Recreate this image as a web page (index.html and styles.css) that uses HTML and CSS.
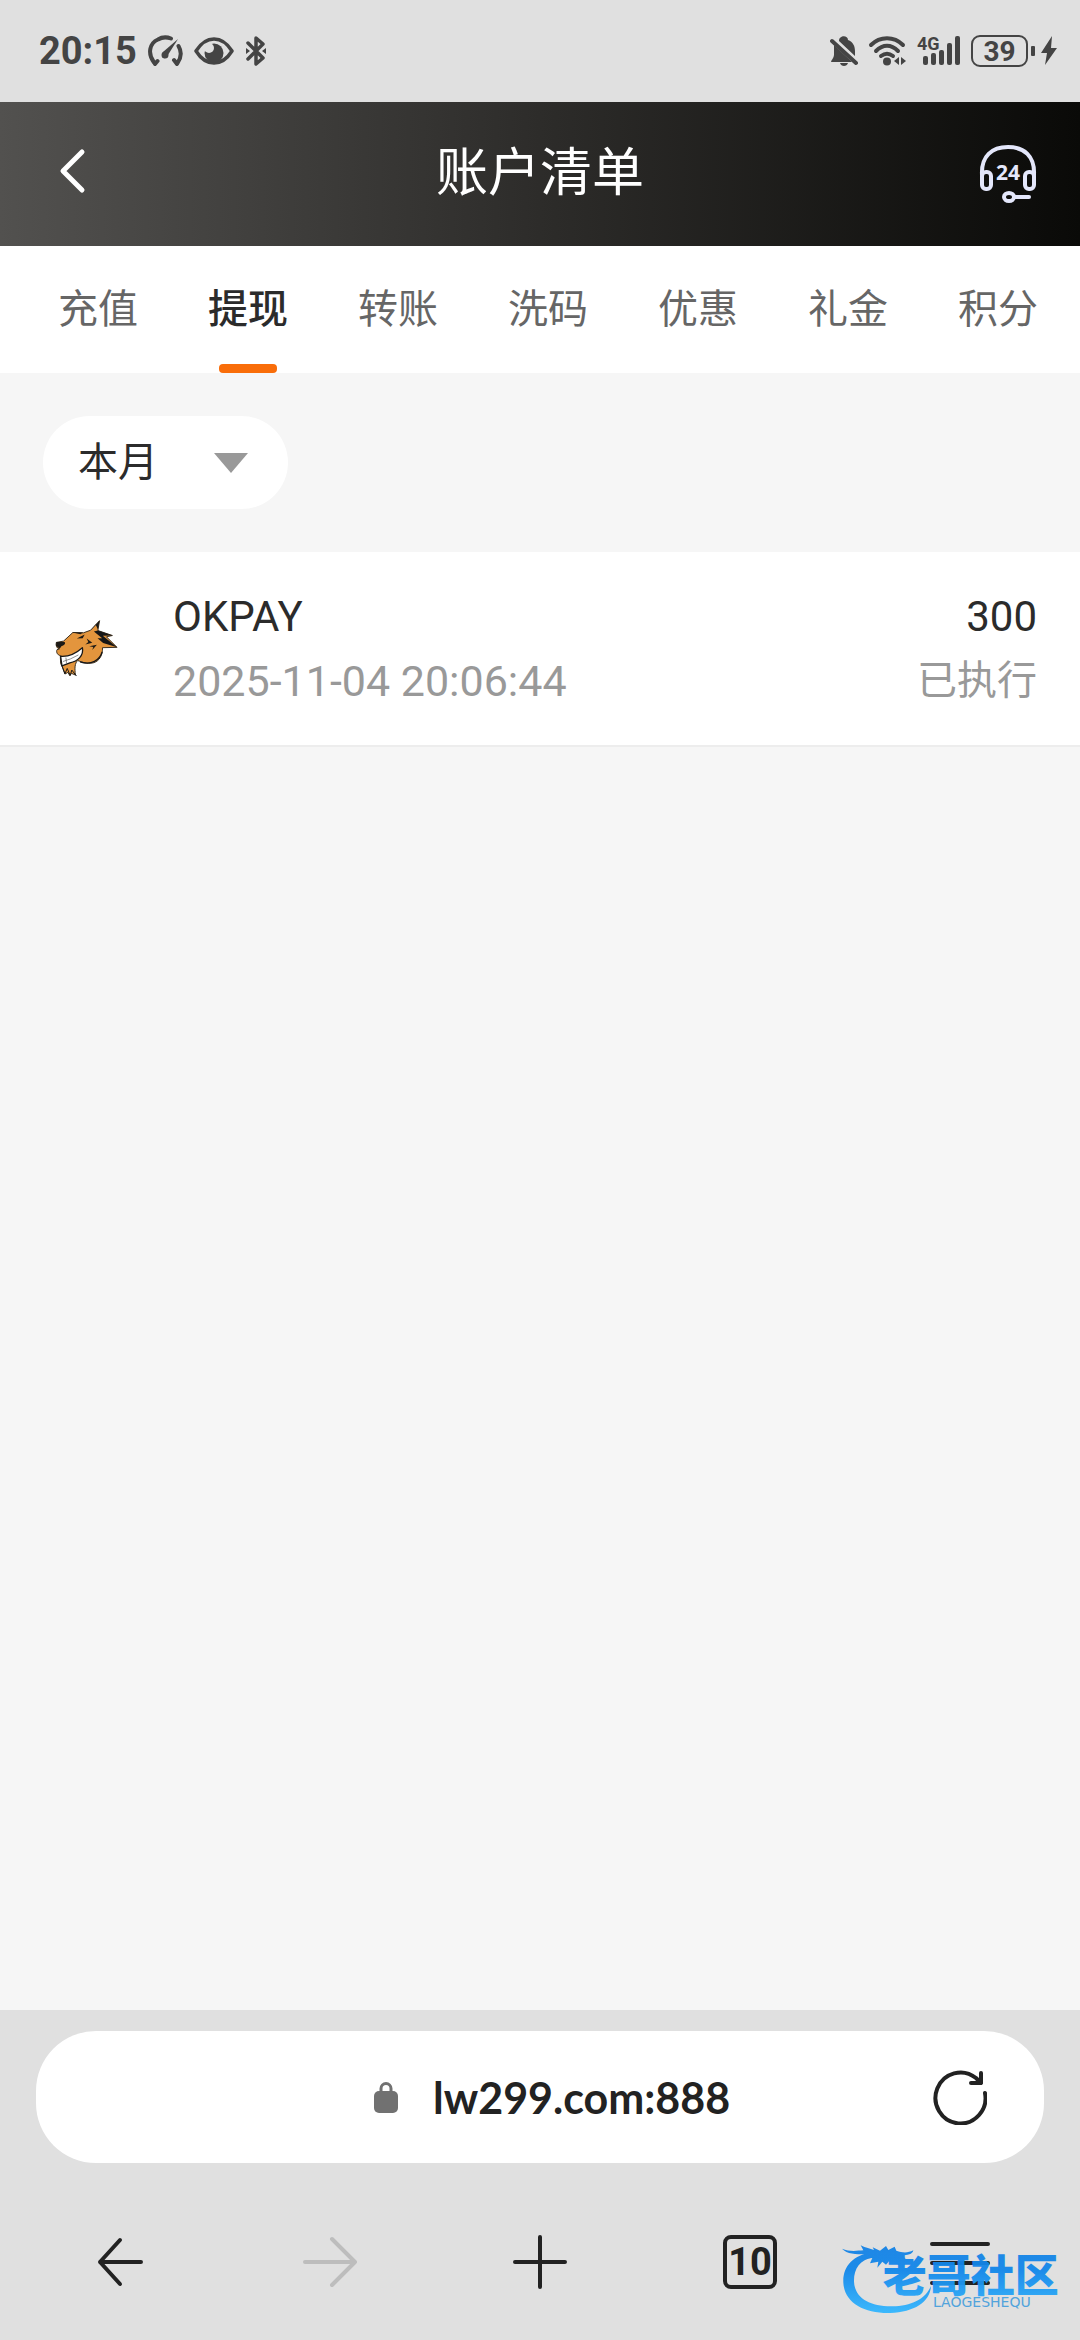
FILE: index.html
```
<!DOCTYPE html>
<html lang="zh-CN">
<head>
  <meta charset="UTF-8">
  <meta name="viewport" content="width=device-width, initial-scale=1.0">
  <title>账户清单</title>
  <link rel="stylesheet" href="styles.css">
</head>
<body>
  <div class="status-bar">
    <div class="status-left">
      <span class="time">20:15</span>
      <svg width="35" height="32" viewBox="0 0 35 32" fill="none" stroke="currentColor" stroke-width="4" stroke-linecap="round">
        <path d="M7 28.500l-1-1C-1 18 2 8 10 4.500C14 2 19 2 23 3.500M30.500 11C34 17 33 23 29.500 28l-.5.500M26 25l3 4M7 29l2.500-3"/>
        <path d="M30 4L18 23c-4 1-5-3-3-6z" fill="currentColor" stroke="none"/>
        <circle cx="17" cy="20" r="3.500" fill="currentColor" stroke="none"/>
      </svg>
      <svg width="40" height="28" viewBox="0 0 40 28">
        <path d="M2 14C12-2 28-2 38 14C28 30 12 30 2 14z" fill="none" stroke="currentColor" stroke-width="3.500" stroke-linejoin="round"/>
        <circle cx="20" cy="16" r="9.500" fill="currentColor"/>
        <circle cx="15" cy="11" r="5" fill="#e0e0e0"/>
      </svg>
      <svg width="22" height="32" viewBox="0 0 22 32" fill="none" stroke="currentColor" stroke-width="3.500" stroke-linejoin="round" stroke-linecap="round">
        <path d="M3 8l15 15l-7 6V3l7 6L3 24"/>
        <path d="M1 13l4 3l-4 3zM21 13l-4 3l4 3z" fill="currentColor" stroke="none"/>
      </svg>
    </div>
    <div class="status-right">
      <svg width="28" height="32" viewBox="0 0 28 32" fill="currentColor">
        <path d="M9 6c0-6 9-6 9-1c5 2 7 6 7 11v5zM4 10l18 17H1c0-2 3-4 3-7zM10 28h8c-1 4-7 4-8 0z"/>
        <path d="M2 6l24 22" stroke="currentColor" stroke-width="4" stroke-linecap="round"/>
      </svg>
      <svg width="39" height="32" viewBox="0 0 39 32" fill="none" stroke="currentColor" stroke-width="4" stroke-linecap="round">
        <path d="M3 10C12 1 26 1 35 10M8 16C15 9 23 9 30 16M13 21C17 18 21 18 25 21"/>
        <circle cx="19" cy="26.500" r="4" fill="currentColor" stroke="none"/>
        <path d="M31 22v8l-5-4zM33 22v8l5-4z" fill="currentColor" stroke="none"/>
      </svg>
      <svg class="signal" width="44" height="32" viewBox="0 0 44 32" fill="currentColor">
        <text x="0" y="15" class="network">4G</text>
        <rect x="6" y="21" width="5" height="9" rx="2"/>
        <rect x="14" y="18" width="5" height="12" rx="2"/>
        <rect x="22" y="15" width="5" height="15" rx="2"/>
        <rect x="30" y="8" width="5" height="22" rx="2"/>
        <rect x="38" y="1" width="5" height="29" rx="2"/>
      </svg>
      <div class="battery">39</div>
      <svg width="16" height="30" viewBox="0 0 16 30" fill="currentColor">
        <path d="M11 0L0 17h6L4 29L16 12h-6z"/>
      </svg>
    </div>
  </div>

  <header class="header">
    <button class="icon-btn back" aria-label="返回">
      <svg width="27" height="52" viewBox="0 0 27 52" fill="none" stroke="#fff" stroke-width="5" stroke-linecap="round" stroke-linejoin="round">
        <path d="M23 4L4 23l19 19"/>
      </svg>
    </button>
    <h1>账户清单</h1>
    <button class="icon-btn service" aria-label="在线客服">
      <svg width="58" height="60" viewBox="0 0 58 60" fill="none" stroke="#e4e7fb" stroke-width="4" stroke-linecap="round">
        <path d="M3 31C2 12 13 3 29 3S56 12 55 31"/>
        <rect x="3" y="28" width="9" height="17" rx="4"/>
        <rect x="46" y="28" width="9" height="17" rx="4"/>
        <ellipse cx="30" cy="53" rx="5" ry="4"/>
        <path d="M36 53h14"/>
        <text x="29" y="36" class="hours">24</text>
      </svg>
    </button>
  </header>

  <nav class="tabs">
    <a href="#">充值</a>
    <a href="#" class="active">提现</a>
    <a href="#">转账</a>
    <a href="#">洗码</a>
    <a href="#">优惠</a>
    <a href="#">礼金</a>
    <a href="#">积分</a>
  </nav>

  <main class="content">
    <div class="filter">
      <div class="select-wrap">
        <select id="period" aria-label="时间范围">
          <option>本月</option>
          <option>上月</option>
        </select>
      </div>
    </div>

    <div class="record">
      <div class="record-icon">
        <svg width="64" height="58" viewBox="75 84 192 176" stroke-linejoin="round">
          <path d="M78 152L100 148L128 122L160 123L182 115L209 86L204 116L248 131L230 135L262 167L218 168C219 190 209 209 190 214C170 218 156 212 143 207C134 214 133 231 136 251L124 246L119 253L113 243L104 248L96 226L91 216L90 192C80 190 77 180 80 174L87 172C78 169 76 161 78 152z" fill="#e3953d" stroke="#3b3020" stroke-width="3"/>
          <path d="M204 116L248 131L219 132L262 167L220 154L203 139L217 139L192 119zM182 115L209 86L204 112L197 98z" fill="#161616"/>
          <path d="M78 151L102 151C108 153 103 162 94 163L88 171L77 162zM140 140l24-12-6 11zM170 140l17 13-21 5 9-7zM178 164l23-5-14 16 3-9zM125 121l34 1-8 5z" fill="#1d1a16"/>
          <path d="M91 194C116 196 139 184 157 168C162 192 143 209 119 214L95 223z" fill="#fff" stroke="#191919" stroke-width="4"/>
          <path d="M98 210L121 202L145 190M107 198l2 18" fill="none" stroke="#555" stroke-width="2"/>
          <path d="M150 211C185 222 209 206 217 181" fill="none" stroke="#161616" stroke-width="4"/>
          <path d="M94 220l10 27 7-16 9 21 5-16 14 18" fill="none" stroke="#171717" stroke-width="3"/>
        </svg>
      </div>
      <div class="record-info">
        <div class="name">OKPAY</div>
        <div class="sub">2025-11-04 20:06:44</div>
      </div>
      <div class="record-amount">
        <div class="name">300</div>
        <div class="sub">已执行</div>
      </div>
    </div>
  </main>

  <footer class="browser-bar">
    <div class="address">
      <div class="address-main">
        <svg width="24" height="32" viewBox="0 0 24 32">
          <path d="M7 12V7.500a5 5 0 0 1 10 0V12" fill="none" stroke="#717171" stroke-width="3"/>
          <rect y="10" width="24" height="22" rx="5" fill="#717171"/>
        </svg>
        <input type="text" id="url" aria-label="网址" value="lw299.com:888">
      </div>
      <button class="icon-btn" aria-label="刷新">
        <svg width="54" height="56" viewBox="0 0 54 56" fill="none" stroke="#222" stroke-width="4" stroke-linecap="round" stroke-linejoin="round">
          <path d="M52 24A25 25.500 0 1 1 43 9L48 14M48 4v10H38"/>
        </svg>
      </button>
    </div>

    <div class="toolbar">
      <button class="icon-btn" aria-label="后退">
        <svg width="54" height="54" viewBox="0 0 54 54">
          <path d="M27 5L7 27l20 22M7 27h41"/>
        </svg>
      </button>
      <button class="icon-btn forward" aria-label="前进" disabled>
        <svg width="54" height="54" viewBox="0 0 54 54">
          <path d="M29 4l23 23-23 23M52 27H2"/>
        </svg>
      </button>
      <button class="icon-btn" aria-label="新建">
        <svg width="54" height="54" viewBox="0 0 54 54">
          <path d="M27 2v50M2 27h50"/>
        </svg>
      </button>
      <button class="icon-btn" aria-label="标签页">
        <span class="tab-count">10</span>
      </button>
      <button class="icon-btn" aria-label="菜单">
        <svg width="60" height="54" viewBox="0 0 60 54">
          <path d="M2 9h56M2 28h56M2 48h56"/>
        </svg>
      </button>
    </div>

    <div class="watermark">
      <svg width="228" height="76" viewBox="60 60 684 228">
        <defs>
          <linearGradient id="blue" gradientUnits="userSpaceOnUse" x1="0" y1="80" x2="0" y2="280">
            <stop offset="0" stop-color="#1583e6"/>
            <stop offset="0.350" stop-color="#1287ea"/>
            <stop offset="1" stop-color="#34b7ff"/>
          </linearGradient>
        </defs>
        <g fill="url(#blue)">
          <path d="M158 96C98 105 68 140 70 188C73 248 132 281 211 279C282 276 330 247 333 198C317 237 272 259 217 259C148 260 104 233 102 185C101 147 119 120 160 112z"/>
          <path d="M66 86C88 96 112 92 130 91L122 76C138 84 150 86 162 90L158 82L180 92L198 78L205 90L224 80L229 92C249 99 263 99 280 91C278 104 261 106 247 106L257 117L278 123C267 131 250 128 237 124L221 132L207 124L198 134L187 125L172 143L175 125L150 130L157 114L133 117L146 103C113 103 83 104 66 86z"/>
          <text x="188" y="216" class="mark-name">老哥社区</text>
          <text x="339" y="261" class="mark-latin">LAOGESHEQU</text>
        </g>
      </svg>
    </div>
  </footer>
</body>
</html>
```
FILE: styles.css
```
* {
  box-sizing: border-box;
}

body {
  font-family: Roboto, "Noto Sans CJK SC", sans-serif;
  margin: 0;
  min-height: 100vh;
  background-color: #f6f6f6;
  color: #2b2b2b;
  display: flex;
  flex-direction: column;
}

svg {
  display: block;
  flex-shrink: 0;
}

.icon-btn {
  display: flex;
  align-items: center;
  justify-content: center;
  padding: 0;
  border: none;
  background: none;
  font-family: inherit;
  cursor: pointer;
}

/* Status bar */
.status-bar {
  height: 102px;
  padding: 0 23px 0 39px;
  background-color: #e0e0e0;
  color: #444;
  display: flex;
  align-items: center;
  justify-content: space-between;
}

.status-left,
.status-right {
  display: flex;
  align-items: center;
  gap: 11px;
}

.status-right {
  gap: 10px;
}

.time {
  font-size: 38px;
  font-weight: 700;
  line-height: 40px;
}

.signal {
  overflow: visible;
}

.network {
  font-size: 18px;
  font-weight: 700;
}

.battery {
  position: relative;
  width: 57px;
  height: 32px;
  margin-right: 3px;
  border: 2px solid #444;
  border-radius: 9px;
  font-size: 28px;
  font-weight: 700;
  line-height: 29px;
  text-align: center;
}

.battery::after {
  content: "";
  position: absolute;
  top: 9px;
  right: -9px;
  width: 4px;
  height: 10px;
  border-radius: 1px;
  background-color: #444;
}

/* Header */
.header {
  height: 144px;
  padding: 0 43px 0 59px;
  background: linear-gradient(to right, #52514f, #2d2c2a 50%, #0a0a08);
  display: flex;
  align-items: center;
}

.header h1 {
  flex: 1;
  margin: 0;
  color: #fff;
  font-size: 52px;
  font-weight: 400;
  line-height: 72px;
  text-align: center;
}

.header .back {
  width: 42px;
  justify-content: flex-start;
}

.hours {
  fill: #e4e7fb;
  stroke: none;
  font-family: "Noto Sans", sans-serif;
  font-size: 21px;
  font-weight: 700;
  text-anchor: middle;
}

/* Tabs */
.tabs {
  height: 127px;
  padding: 0 7px 0 23px;
  background-color: #fff;
  display: grid;
  grid-template-columns: repeat(7, 1fr);
}

.tabs a {
  position: relative;
  padding-bottom: 8px;
  display: flex;
  align-items: center;
  justify-content: center;
  color: #666;
  font-size: 40px;
  text-decoration: none;
}

.tabs .active {
  color: #2b2b2b;
  font-weight: 500;
}

.tabs .active::after {
  content: "";
  position: absolute;
  bottom: 0;
  width: 58px;
  height: 9px;
  border-radius: 4px;
  background-color: #f96d09;
}

/* Content */
.content {
  flex: 1;
}

.filter {
  padding: 43px;
}

.select-wrap {
  position: relative;
  width: 245px;
}

.select-wrap select {
  display: block;
  width: 100%;
  height: 93px;
  padding: 0 35px;
  border: none;
  border-radius: 47px;
  background-color: #fff;
  color: #2b2b2b;
  font-family: inherit;
  font-size: 40px;
  appearance: none;
}

.select-wrap::after {
  content: "";
  position: absolute;
  top: 37px;
  right: 40px;
  border: 17px solid transparent;
  border-top: 20px solid #999;
  border-bottom: none;
  pointer-events: none;
}

.record {
  padding: 33px 43px 32px;
  border-bottom: 2px solid #ededed;
  background-color: #fff;
  display: flex;
  align-items: center;
}

.record-icon {
  width: 87px;
  margin-right: 43px;
  display: flex;
  justify-content: center;
}

.record-info {
  flex: 1;
}

.record-amount {
  text-align: right;
}

.name,
.sub {
  font-size: 42px;
  line-height: 64px;
}

.sub {
  color: #999;
  font-size: 43px;
}

.record-amount .sub {
  font-size: 40px;
}

/* Browser bar */
.browser-bar {
  position: relative;
  padding: 21px 0 0;
  background-color: #e0e0e0;
}

.address {
  height: 132px;
  margin: 0 36px;
  padding: 0 57px 0 142px;
  border-radius: 60px;
  background-color: #fff;
  display: flex;
  align-items: center;
}

.address-main {
  flex: 1;
  display: flex;
  align-items: center;
  justify-content: center;
  gap: 35px;
}

.address-main input {
  width: 304px;
  padding: 0;
  border: none;
  outline: none;
  background: none;
  color: #222;
  font-family: Lato, sans-serif;
  font-size: 43px;
  font-weight: 700;
}

.toolbar {
  height: 177px;
  padding: 20px 15px 0;
  display: grid;
  grid-template-columns: repeat(5, 1fr);
}

.toolbar svg {
  fill: none;
  stroke: #222;
  stroke-width: 4;
  stroke-linecap: round;
  stroke-linejoin: round;
}

.toolbar .forward svg {
  stroke: #bdbdbd;
}

.tab-count {
  width: 54px;
  height: 54px;
  border: 4px solid #222;
  border-radius: 8px;
  color: #222;
  font-size: 38px;
  font-weight: 700;
  line-height: 46px;
}

/* Watermark over the toolbar */
.watermark {
  position: absolute;
  right: 12px;
  bottom: 24px;
  opacity: 0.95;
  pointer-events: none;
}

.mark-name {
  font-family: "Noto Sans CJK SC", sans-serif;
  font-size: 132px;
  font-weight: 900;
}

.mark-latin {
  fill: #4aa0dc;
  font-family: "DejaVu Sans", sans-serif;
  font-size: 42px;
}
```
